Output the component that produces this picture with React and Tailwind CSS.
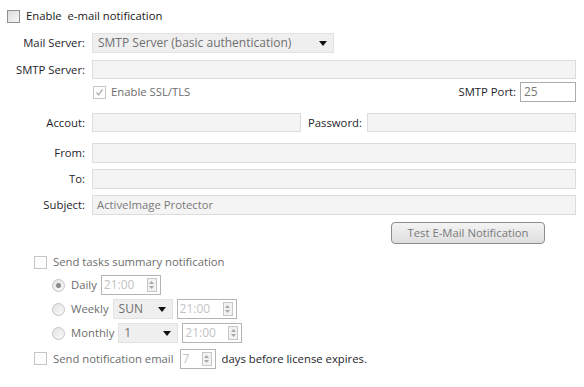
import React from "react";

const font = { fontFamily: '"Open Sans", "Noto Sans", sans-serif' };

function CheckBox({ disabled, checked }) {
  return (
    <div
      className={`w-[13px] h-[13px] border flex items-center justify-center shrink-0 ${
        disabled ? "border-[#c6c6c6] bg-[#fdfdfd]" : "border-[#8f8f8f] bg-gradient-to-br from-[#dcdcdc] to-[#f6f6f6]"
      }`}
    >
      {checked && (
        <svg width="9" height="9" viewBox="0 0 9 9">
          <path d="M1.5 4.5 L3.5 7 L7.5 1.5" fill="none" stroke="#b4b4b4" strokeWidth="1.3" />
        </svg>
      )}
    </div>
  );
}

function Radio({ checked }) {
  return (
    <div className="w-[13px] h-[13px] rounded-full border border-[#c4c4c4] bg-gradient-to-br from-[#e2e2e2] to-[#fafafa] flex items-center justify-center shrink-0">
      {checked && <div className="w-[5px] h-[5px] rounded-full bg-[#8a8a8a]" />}
    </div>
  );
}

function Spin({ value, w }) {
  return (
    <div className={`${w} h-[20px] border border-[#b4b4b4] bg-white flex items-center justify-between pl-[2px] pr-[3px] shrink-0`}>
      <span className="text-[#c3c3c3] text-[12px]">{value}</span>
      <div className="w-[10px] h-[14px] border border-[#c6c6c6] bg-[#f2f2f2] flex flex-col items-center justify-around py-[1px]">
        <svg width="5" height="3" viewBox="0 0 5 3"><path d="M0 3 L2.5 0 L5 3 Z" fill="#a8a8a8" /></svg>
        <svg width="5" height="3" viewBox="0 0 5 3"><path d="M0 0 L2.5 3 L5 0 Z" fill="#a8a8a8" /></svg>
      </div>
    </div>
  );
}

function Select({ value, w }) {
  return (
    <div className={`${w} h-[20px] border border-[#e2e2e2] bg-[#efefef] flex items-center justify-between pl-[5px] pr-[6px] shrink-0`}>
      <span className="text-[#6f6f6f] text-[12px]">{value}</span>
      <svg width="8" height="5" viewBox="0 0 8 5"><path d="M0 0 L8 0 L4 5 Z" fill="#111" /></svg>
    </div>
  );
}

function Field({ className = "", children }) {
  return (
    <div className={`border border-[#dcdcdc] bg-[#f4f4f4] flex items-center px-[4px] text-[#7a7a7a] ${className}`}>
      {children}
    </div>
  );
}

function Label({ children }) {
  return <div className="w-[86px] shrink-0 text-right text-[#1e1e2a] pr-[1px]">{children}</div>;
}

export default function App() {
  return (
    <div className="w-[584px] h-[387px] bg-white text-[11.3px] leading-[16px] overflow-hidden" style={font}>
      <div className="flex items-center gap-[6px] pl-[7px] pt-[8px]">
        <CheckBox />
        <span className="text-[#1a1a1a]">Enable&nbsp; e-mail notification</span>
      </div>

      <div className="pr-[8px]">
        <div className="flex items-center gap-[6px] mt-[9px]">
          <Label>Mail Server:</Label>
          <Select value="SMTP Server (basic authentication)" w="w-[242px]" />
        </div>

        <div className="flex items-center gap-[6px] mt-[7px]">
          <Label>SMTP Server:</Label>
          <Field className="flex-1 h-[19px]" />
        </div>

        <div className="flex items-center mt-[3px] h-[20px]">
          <div className="w-[93px] shrink-0" />
          <CheckBox disabled checked />
          <span className="ml-[5px] text-[#6d6d6d]">Enable SSL/TLS</span>
          <span className="ml-auto text-[#1e1e2a]">SMTP Port:</span>
          <div className="ml-[4px] w-[56px] h-[20px] border border-[#acacac] bg-white flex items-center px-[3px] text-[#7a7a7a] text-[12px]">25</div>
        </div>

        <div className="flex items-center mt-[11px]">
          <Label>Accout:</Label>
          <Field className="ml-[6px] w-[209px] h-[19px]" />
          <span className="ml-[7px] w-[59px] shrink-0 text-[#1e1e2a]">Password:</span>
          <Field className="flex-1 h-[19px]" />
        </div>

        <div className="flex items-center gap-[6px] mt-[11px]">
          <Label>From:</Label>
          <Field className="flex-1 h-[20px]" />
        </div>

        <div className="flex items-center gap-[6px] mt-[6px]">
          <Label>To:</Label>
          <Field className="flex-1 h-[20px]" />
        </div>

        <div className="flex items-center gap-[6px] mt-[6px]">
          <Label>Subject:</Label>
          <Field className="flex-1 h-[20px]">ActiveImage Protector</Field>
        </div>

        <div className="flex justify-end mt-[7px] pr-[31px]">
          <div className="w-[154px] h-[22px] rounded-[4px] border border-[#8c8c8c] bg-gradient-to-b from-[#f4f4f4] to-[#dedede] flex items-center justify-center text-[#7a7a7a]">
            Test E-Mail Notification
          </div>
        </div>
      </div>

      <div className="pl-[34px]">
        <div className="flex items-center gap-[6px] mt-[10px]">
          <CheckBox disabled />
          <span className="text-[#6d6d6d]">Send tasks summary notification</span>
        </div>

        <div className="pl-[18px] flex flex-col gap-[4px] mt-[5px]">
          <div className="flex items-center h-[20px]">
            <Radio checked />
            <span className="ml-[6px] mr-[4px] text-[#6d6d6d]">Daily</span>
            <Spin value="21:00" w="w-[60px]" />
          </div>
          <div className="flex items-center h-[20px]">
            <Radio />
            <span className="ml-[6px] mr-[4px] text-[#6d6d6d]">Weekly</span>
            <Select value="SUN" w="w-[60px]" />
            <div className="w-[4px]" />
            <Spin value="21:00" w="w-[60px]" />
          </div>
          <div className="flex items-center h-[20px]">
            <Radio />
            <span className="ml-[6px] mr-[4px] text-[#6d6d6d]">Monthly</span>
            <Select value="1" w="w-[60px]" />
            <div className="w-[4px]" />
            <Spin value="21:00" w="w-[60px]" />
          </div>
        </div>

        <div className="flex items-center mt-[5px] h-[21px]">
          <CheckBox disabled />
          <span className="ml-[6px] text-[#6d6d6d]">Send notification email</span>
          <div className="ml-[6px]">
            <Spin value="7" w="w-[36px]" />
          </div>
          <span className="ml-[6px] text-[#1e1e2a]">days before license expires.</span>
        </div>
      </div>
    </div>
  );
}
